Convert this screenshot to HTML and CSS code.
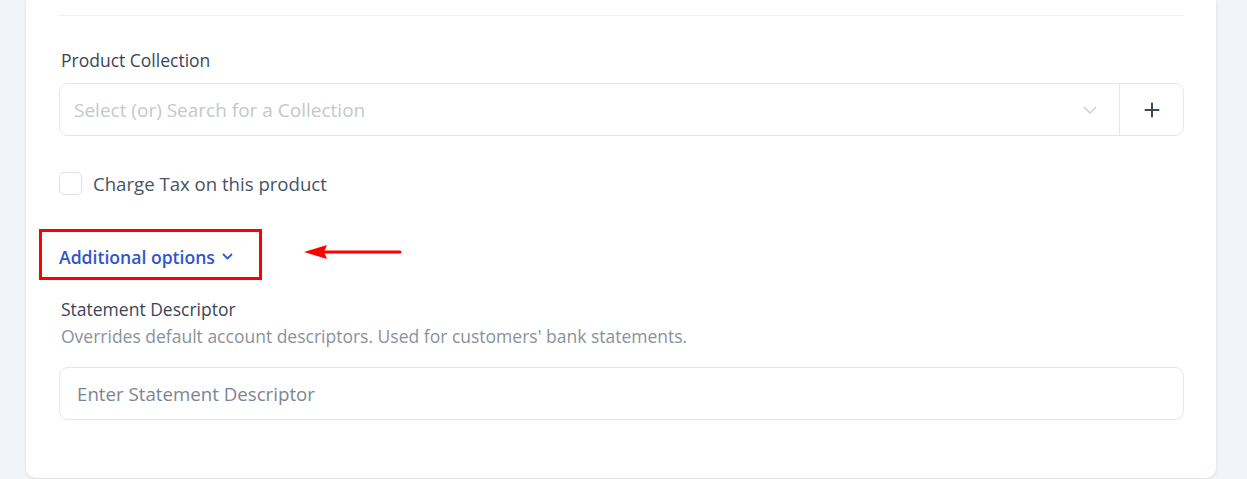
FILE: index.html
```html
<!DOCTYPE html>
<html>
<head>
<meta charset="utf-8">
<link rel="stylesheet" href="styles.css">
</head>
<body>
<div class="card">
  <div class="divider"></div>
  <div class="field">
    <label class="label">Product Collection</label>
    <div class="select-group">
      <div class="select">
        <span class="placeholder">Select (or) Search for a Collection</span>
        <svg class="chev" width="14" height="8" viewBox="0 0 14 8"><path d="M1 1l6 6 6-6" fill="none" stroke="#c8ccd3" stroke-width="1.4"/></svg>
      </div>
      <button class="add">
        <svg width="16" height="16" viewBox="0 0 16 16"><path d="M8 1.5v13M1.5 8h13" stroke="#3f4654" stroke-width="2" stroke-linecap="round"/></svg>
      </button>
    </div>
  </div>
  <div class="check-row">
    <span class="checkbox"></span>
    <span class="check-text">Charge Tax on this product</span>
  </div>
  <div class="options-row">
    <div class="highlight">
      <span class="options-link">Additional options</span>
      <svg class="opt-chev" width="11" height="7" viewBox="0 0 11 7"><path d="M1 1l4.5 4.5L10 1" fill="none" stroke="#3355cc" stroke-width="1.8"/></svg>
    </div>
    <svg class="arrow" width="100" height="20" viewBox="0 0 100 20"><path d="M22 10H97" stroke="#ff0000" stroke-width="3" stroke-linecap="round"/><path d="M1 10L24 3L21 10L24 17Z" fill="#ff0000"/></svg>
  </div>
  <div class="field desc-field">
    <label class="label">Statement Descriptor</label>
    <p class="help">Overrides default account descriptors. Used for customers' bank statements.</p>
    <div class="input"><span class="placeholder dark">Enter Statement Descriptor</span></div>
  </div>
</div>
</body>
</html>
```
FILE: styles.css
```css
* { box-sizing: border-box; }
html, body { margin: 0; padding: 0; }
body {
  background: #f1f5f9;
  font-family: "Open Sans", "Noto Sans", sans-serif;
  height: 479px;
  overflow: hidden;
}
.card {
  margin-left: 26px;
  width: 1190px;
  height: 478px;
  background: #fff;
  border-radius: 0 0 10px 10px;
  box-shadow: 0 1px 3px rgba(16, 24, 40, 0.12);
  padding: 15px 32px 0 33px;
}
.divider {
  border-top: 1px solid #eef0f3;
}
.field { display: flex; flex-direction: column; }
.label {
  font-size: 17.5px;
  color: #3b4556;
  line-height: 22px;
  margin-top: 33px;
  padding-left: 2px;
}
.select-group {
  margin-top: 12px;
  display: flex;
  height: 53px;
  border: 1px solid #e4e7ec;
  border-radius: 9px;
}
.select {
  flex: 1;
  display: flex;
  align-items: center;
  justify-content: space-between;
  padding: 0 22px 0 14px;
  border-right: 1px solid #e4e7ec;
}
.placeholder {
  font-size: 19px;
  color: #c4c8cf;
}
.placeholder.dark { color: #7c8594; font-size: 18.7px; }
.add {
  width: 63px;
  border: 0;
  background: transparent;
  display: flex;
  align-items: center;
  justify-content: center;
  padding: 0;
}
.check-row {
  display: flex;
  align-items: center;
  gap: 11px;
  margin-top: 35px;
}
.checkbox {
  width: 23px;
  height: 23px;
  border: 1px solid #dfe2e7;
  border-radius: 5px;
}
.check-text {
  font-size: 18.6px;
  color: #475467;
}
.options-row {
  display: flex;
  align-items: center;
  margin-top: 33px;
  margin-left: -20px;
}
.highlight {
  width: 223px;
  height: 51px;
  border: 3px solid #ff0000;
  display: flex;
  align-items: center;
  padding: 4px 0 0 17px;
  gap: 7px;
}
.options-link {
  font-size: 17.6px;
  font-weight: 600;
  color: #3355cc;
}
.arrow {
  margin-left: 41px;
  margin-top: -6px;
}
.desc-field .label { margin-top: 18px; }
.help {
  margin: 5px 0 0 2px;
  font-size: 17.5px;
  color: #8a919d;
  line-height: 22px;
}
.input {
  margin-top: 20px;
  height: 53px;
  border: 1px solid #e4e7ec;
  border-radius: 9px;
  display: flex;
  align-items: center;
  padding: 0 17px;
}
```
